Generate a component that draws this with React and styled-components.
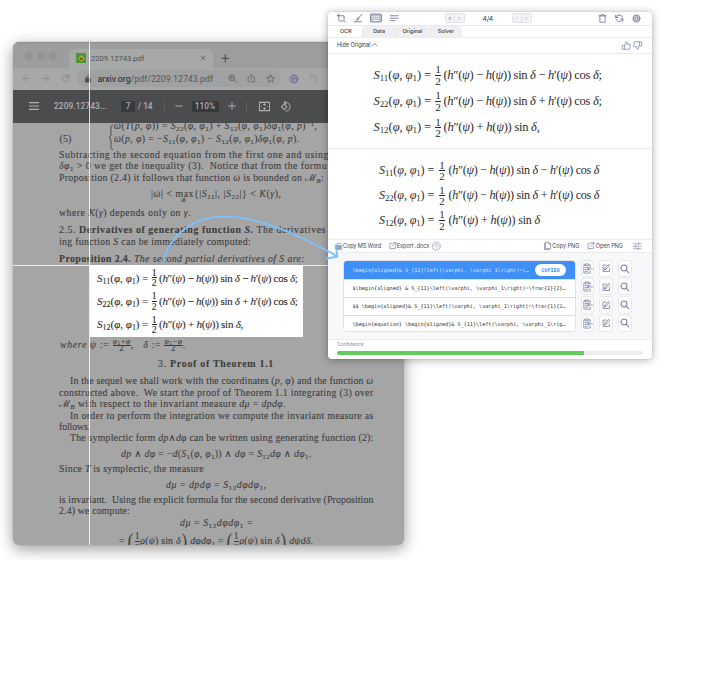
import React, { useLayoutEffect, useRef, useState } from "react";
import styled, { createGlobalStyle } from "styled-components";

const Global = createGlobalStyle`
  * { box-sizing: border-box; }
  html, body { margin: 0; background: #fff; }
  body { font-family: Inter, "Noto Sans", sans-serif; }
  svg { display: block; flex: none; overflow: visible; }
`;

const serif = `"Liberation Serif", "DejaVu Serif", serif`;

/* ---------- text set to a fixed measure ---------- */

const Measure = styled.span`
  display: inline-block;
  flex: none;
  white-space: pre;
  width: ${(p) => p.$w}px;
  margin-left: ${(p) => p.$ml || 0}px;
`;
const Run = styled.span`
  display: inline-block;
  white-space: pre;
`;

function Fit({ w, ml, children }) {
  const ref = useRef(null);
  const [spacing, setSpacing] = useState(null);
  useLayoutEffect(() => {
    if (spacing !== null) return;
    const natural = ref.current.getBoundingClientRect().width;
    const count = ref.current.textContent.length || 1;
    setSpacing((w - natural) / count);
  }, [spacing, w]);
  return (
    <Measure $w={w} $ml={ml}>
      <Run ref={ref} style={{ letterSpacing: spacing === null ? undefined : `${spacing}px` }}>
        {children}
      </Run>
    </Measure>
  );
}

/* ---------- math ---------- */

const Sub = styled.sub`
  font-size: 0.72em;
  line-height: 0;
  vertical-align: -0.22em;
  font-style: normal;
`;
const Sup = styled.sup`
  font-size: 0.72em;
  line-height: 0;
  vertical-align: 0.45em;
`;
const FracBox = styled.span`
  display: inline-flex;
  flex-direction: column;
  align-items: center;
  flex: none;
  line-height: 1;
  vertical-align: middle;
  margin: 0 ${(p) => p.$gap || 0}px;
  font-size: ${(p) => p.$size || "1em"};
  min-width: 0.5em;
`;
const FracTop = styled.span`
  border-bottom: 1px solid currentColor;
  min-width: 100%;
  text-align: center;
  line-height: ${(p) => p.$lh || 0.95};
`;
const FracBottom = styled.span`
  line-height: ${(p) => p.$lh || 0.95};
`;
const Frac = ({ a, b, size, gap, lh }) => (
  <FracBox $size={size} $gap={gap}>
    <FracTop $lh={lh}>{a}</FracTop>
    <FracBottom $lh={lh}>{b}</FracBottom>
  </FracBox>
);

const EqRow = styled.div`
  display: flex;
  align-items: center;
  height: ${(p) => p.$h}px;
  font: ${(p) => p.$size}px ${serif};
  color: ${(p) => p.$color || "#2b2b2b"};
`;
const FracCell = styled.span`
  display: flex;
  justify-content: center;
  width: ${(p) => p.$w}px;
`;
const Stack = styled.div`
  padding: ${(p) => p.$top}px 0 0 ${(p) => p.$left}px;
`;
const I = styled.i``;

const S = ({ n }) => (
  <>
    <I>S</I>
    <Sub>{n}</Sub>
  </>
);
const Args = () => (
  <>
    (<I>φ</I>, <I>φ</I>
    <Sub>1</Sub>)
  </>
);

function Equations({ top, left, rowH, size, cols, end, semi }) {
  const rows = [
    { n: "11", op: "−", tail: "−" },
    { n: "22", op: "−", tail: "+" },
    { n: "12", op: "+", tail: null },
  ];
  return (
    <Stack $top={top} $left={left}>
      {rows.map((r) => (
        <EqRow key={r.n} $h={rowH} $size={size}>
          <Fit w={cols[0]}>
            <S n={r.n} />
            (<I>φ</I>, <I>φ</I>
            <Sub>1</Sub>)
          </Fit>
          <Fit ml={cols[1]} w={cols[2]}>=</Fit>
          <FracCell $w={cols[3]}>
            <Frac a="1" b="2" size="0.9em" lh={0.93} />
          </FracCell>
          <Fit w={r.tail ? end[0] : end[1]}>
            (<I>h</I>″(<I>ψ</I>) {r.op} <I>h</I>(<I>ψ</I>)) sin <I>δ</I>
            {r.tail ? (
              <>
                {" "}{r.tail} <I>h</I>′(<I>ψ</I>) cos <I>δ</I>
                {semi ? ";" : ""}
              </>
            ) : semi ? (
              ","
            ) : (
              ""
            )}
          </Fit>
        </EqRow>
      ))}
    </Stack>
  );
}

/* ---------- icons ---------- */

const Svg = styled.svg`
  width: ${(p) => p.$s}px;
  height: ${(p) => p.$s}px;
  margin-left: ${(p) => p.$ml || 0}px;
  fill: none;
  stroke: ${(p) => p.$c || "currentColor"};
  stroke-width: ${(p) => p.$sw || 2};
  stroke-linecap: round;
  stroke-linejoin: round;
`;
const Icon = ({ s = 8, ml, c, sw, children }) => (
  <Svg viewBox="0 0 24 24" $s={s} $ml={ml} $c={c} $sw={sw} aria-hidden="true">
    {children}
  </Svg>
);

/* ---------- canvas and windows ---------- */

const Canvas = styled.main`
  position: relative;
  width: 725px;
  height: 560px;
  overflow: hidden;
`;
const Browser = styled.section`
  position: absolute;
  left: 12.5px;
  top: 41.5px;
  width: 391.5px;
  height: 503.5px;
  border-radius: 6px;
  overflow: hidden;
  background: #a5a5a5;
  display: flex;
  flex-direction: column;
`;
const BrowserShadow = styled.div`
  position: absolute;
  left: 12.5px;
  top: 41.5px;
  width: 391.5px;
  height: 503.5px;
  border-radius: 6px;
  box-shadow: 0 4px 15px rgba(0, 0, 0, 0.4), 0 0 1px rgba(0, 0, 0, 0.4);
`;
const TabStrip = styled.div`
  height: 26px;
  flex: none;
  display: flex;
  align-items: flex-end;
  padding-left: 12.5px;
  background: #9b9d9f;
  border-top: 1px solid #8d8f90;
  color: #4c4d4f;
`;
const Dots = styled.div`
  display: flex;
  gap: 4px;
  height: 23px;
  align-items: center;
  width: 44px;
  padding-bottom: 1px;
`;
const Dot = styled.span`
  width: 8px;
  height: 8px;
  border-radius: 50%;
  background: #929394;
`;
const ChromeTab = styled.div`
  width: 143.5px;
  height: 19px;
  border-radius: 5px 5px 0 0;
  background: #a7a8a8;
  display: flex;
  align-items: center;
  padding-left: 7px;
  font: 7.6px "Roboto", sans-serif;
  color: #505153;
`;
const Favicon = styled.span`
  width: 10px;
  height: 10px;
  background: #4a9a35;
  display: flex;
  align-items: center;
  justify-content: center;
`;
const NewTab = styled.div`
  height: 19px;
  display: flex;
  align-items: center;
  margin-left: 8px;
`;
const AddressBar = styled.div`
  height: 22px;
  flex: none;
  display: flex;
  align-items: center;
  padding-left: 8.5px;
  background: #a7a8a8;
  color: #767779;
`;
const Omnibox = styled.div`
  margin-left: 7px;
  width: 204px;
  height: 17px;
  border-radius: 9px;
  background: #9fa1a2;
  display: flex;
  align-items: center;
  padding-left: 7.5px;
  font: 8.9px "Roboto", sans-serif;
  color: #58595b;
`;
const Host = styled.span`
  color: #252628;
`;
const PdfBar = styled.div`
  height: 33.5px;
  flex: none;
  display: flex;
  align-items: center;
  padding-left: 16px;
  background: #4b4c4e;
  color: #b0b0b0;
  font: 500 8.3px "Roboto", sans-serif;
`;
const Field = styled.span`
  margin-left: ${(p) => p.$ml}px;
  width: ${(p) => p.$w}px;
  height: 11.5px;
  background: #38393a;
  display: flex;
  align-items: center;
  justify-content: center;
`;
const Divider = styled.span`
  margin-left: ${(p) => p.$ml}px;
  width: 1px;
  height: 9px;
  background: #606163;
`;
const Page = styled.article`
  flex: 1;
  overflow: hidden;
  font: 9.9px ${serif};
  color: #3e3e3e;
  -webkit-text-stroke: 0.1px currentColor;
`;
const Line = styled.div`
  display: flex;
  align-items: center;
  height: 11px;
  line-height: 11px;
  margin-top: ${(p) => p.$mt}px;
  padding-left: ${(p) => p.$x - 12.5}px;
`;
const Selection = styled.div`
  margin: 1.5px 0 0 77px;
  width: 213.5px;
  height: 72px;
  background: #fff;
`;
const Paren = styled.span`
  display: inline-block;
  font-size: 20px;
  line-height: 0;
  vertical-align: -4px;
  transform: scaleX(0.8);
`;
const MaxOp = styled.span`
  display: inline-block;
  position: relative;
`;
const Under = styled.span`
  position: absolute;
  left: 6px;
  top: 7px;
  font-size: 5.5px;
`;
const CrossV = styled.div`
  position: absolute;
  left: 89px;
  top: 41.5px;
  width: 1px;
  height: 503.5px;
  background: rgba(255, 255, 255, 0.8);
`;
const CrossH = styled.div`
  position: absolute;
  left: 12.5px;
  top: 265px;
  width: 315px;
  height: 1px;
  background: rgba(255, 255, 255, 0.75);
`;
const Arrow = styled.svg`
  position: absolute;
  left: 0;
  top: 0;
  width: 725px;
  height: 560px;
  fill: none;
  stroke: #7fc0f7;
  stroke-width: 1.8;
  stroke-linecap: round;
  stroke-linejoin: round;
`;

/* ---------- snip panel ---------- */

const Panel = styled.section`
  position: absolute;
  left: 327.5px;
  top: 11.5px;
  width: 324.5px;
  height: 347.5px;
  border-radius: 4px;
  overflow: hidden;
  background: #fff;
  color: #3b3d4a;
  font-size: 5.6px;
`;
const PanelShadow = styled.div`
  position: absolute;
  left: 327.5px;
  top: 11.5px;
  width: 324.5px;
  height: 347.5px;
  border-radius: 4px;
  box-shadow: 0 1px 8px rgba(0, 0, 0, 0.32), 0 0 1px rgba(0, 0, 0, 0.35);
`;
const Bar = styled.div`
  display: flex;
  align-items: center;
  height: ${(p) => p.$h}px;
  padding-left: ${(p) => p.$pl || 0}px;
  border-bottom: 1px solid #ebebef;
  color: ${(p) => p.$c || "inherit"};
`;
const Nav = styled.span`
  display: flex;
  margin-left: ${(p) => p.$ml}px;
  width: 20px;
  height: 10px;
  border: 1px solid #dfe0e8;
  border-radius: 2px;
  background: #f4f4f7;
  color: ${(p) => p.$c};
  font-size: 6px;
  line-height: 7px;
`;
const NavHalf = styled.span`
  flex: 1;
  text-align: center;
  & + & { border-left: 1px solid #e2e3e9; }
`;
const Count = styled.span`
  margin-left: 18px;
  font-size: 6.8px;
  color: #333;
`;
const Tabs = styled.div`
  display: flex;
  height: 11.5px;
  padding-left: 1px;
  border-bottom: 1px solid #ececf0;
`;
const Tab = styled.div`
  width: 33.4px;
  border-radius: 4px 4px 0 0;
  background: ${(p) => (p.$on ? "#fff" : "#efeff2")};
  border-left: 1px solid ${(p) => (p.$on ? "#fff" : "#e6e6eb")};
  display: flex;
  align-items: center;
  justify-content: center;
  font-size: 5.4px;
  font-weight: 500;
`;
const Preview = styled.div`
  height: ${(p) => p.$h}px;
  border-bottom: 1px solid #ececf0;
`;
const Results = styled.div`
  height: 87px;
  background: #f8f8fa;
  border-bottom: 1px solid #eeeef1;
  padding: 7px 0 0 15px;
  display: grid;
  grid-template-columns: 233px 13.5px 13.5px 14px;
  column-gap: 5px;
`;
const List = styled.div`
  height: 72px;
  border: 1px solid #e1e1e6;
  border-radius: 4px;
  overflow: hidden;
  background: #fff;
`;
const Formula = styled.div`
  height: ${(p) => (p.$on ? 17.5 : 18)}px;
  display: flex;
  align-items: center;
  padding-left: 9px;
  font: 5.2px "DejaVu Sans Mono", monospace;
  background: ${(p) => (p.$on ? "#3e8ff7" : "#fff")};
  color: ${(p) => (p.$on ? "#dbe9ff" : "#333")};
  & + & { border-top: 1px solid #dedee3; }
`;
const Copied = styled.span`
  margin-left: 6.5px;
  width: 31px;
  height: 12px;
  border-radius: 6px;
  background: #fff;
  color: #3e8ff7;
  font: 800 5.1px "DejaVu Sans Mono", monospace;
  display: flex;
  align-items: center;
  justify-content: center;
`;
const ButtonColumn = styled.div`
  display: flex;
  flex-direction: column;
  gap: 1px;
`;
const IconButton = styled.button`
  padding: 0;
  width: 100%;
  height: 17.2px;
  border: 1px solid #e8e8ed;
  border-radius: 3px;
  background: #fff;
  color: #7a7fa0;
  display: flex;
  align-items: center;
  justify-content: center;
`;
const Footer = styled.div`
  padding: 1px 9.5px 0;
  color: #9194aa;
  font-size: 5.2px;
  line-height: 7px;
`;
const Track = styled.div`
  margin-top: 2.5px;
  height: 4px;
  border-radius: 2px;
  background: #ececee;
`;
const Fill = styled.div`
  width: 246.5px;
  height: 4px;
  border-radius: 2px 0 0 2px;
  background: #63ca5c;
`;

const formulas = [
  "\\begin{aligned}& S_{11}\\left(\\varphi, \\varphi_1\\right)=\\…",
  "$\\begin{aligned} & S_{11}\\left(\\varphi, \\varphi_1\\right)=\\frac{1}{2}…",
  "$$ \\begin{aligned}& S_{11}\\left(\\varphi, \\varphi_1\\right)=\\frac{1}{2…",
  "\\begin{equation} \\begin{aligned}& S_{11}\\left(\\varphi, \\varphi_1\\rig…",
];

const buttonIcons = [
  <Icon s={11} sw={1.7} key="paste">
    <path d="M8 4H4v18h14v-4M14 4h4v5M8 2h6v4H8zM7 10h8M7 14h5M7 18h6M23 13H13M16 10l-3 3 3 3" />
  </Icon>,
  <Icon s={8.5} sw={2.4} key="edit">
    <path d="M11 3H3v18h18v-8M20 2l2 2L11 15l-4 1 1-4zM7 16l4-1" />
  </Icon>,
  <Icon s={9.5} sw={2.6} key="search">
    <circle cx="10" cy="10" r="7.5" />
    <path d="M15.5 15.5l7 7" />
  </Icon>,
];

const M = () => (
  <>
    ℳ<Sub><I>B</I></Sub>
  </>
);
const phi1 = (
  <>
    <I>φ</I>
    <Sub>1</Sub>
  </>
);

function PdfPage() {
  return (
    <Page>
      <Line $mt={-3} $x={114}>
        <Fit w={203}>
          <I>ω</I>(<I>T</I>(<I>p</I>, <I>φ</I>)) = <S n="22" /><Args /> + <S n="12" /><Args /><I>δ</I>{phi1}(<I>φ</I>, <I>p</I>)<Sup>−1</Sup>,
        </Fit>
      </Line>
      <Line $mt={2} $x={59.5}>
        <Fit w={12}>(5)</Fit>
        <Svg viewBox="0 0 6 26" $s={26} $ml={26} $sw={0.9}>
          <path d="M5 -1c-3 0-2 3-2 6s0 6-2 6.500c2 .5 2 3 2 6s-1 6 2 6" />
        </Svg>
        <Fit ml={-9.5} w={185.5}>
          <I>ω</I>(<I>p</I>, <I>φ</I>) = −<S n="11" /><Args /> − <S n="12" /><Args /><I>δ</I>{phi1}(<I>φ</I>, <I>p</I>).
        </Fit>
      </Line>
      <Line $mt={5} $x={59}><Fit w={270}>Subtracting the second equation from the first one and using</Fit></Line>
      <Line $mt={0.4} $x={59}><Fit w={268}><I>δ</I>{phi1} &gt; 0 we get the inequality (3).  Notice that from the formu</Fit></Line>
      <Line $mt={0.4} $x={59}><Fit w={265}>Proposition (2.4) it follows that function <I>ω</I> is bounded on <M />:</Fit></Line>
      <Line $mt={5.2} $x={151}>
        <Fit w={131}>|<I>ω</I>| &lt; <MaxOp>max<Under>ℬ</Under></MaxOp>{"{"}|<S n="11" />|, |<S n="22" />|{"}"} &lt; <I>K</I>(<I>γ</I>),</Fit>
      </Line>
      <Line $mt={8} $x={59}><Fit w={132}>where <I>K</I>(<I>γ</I>) depends only on <I>γ</I>.</Fit></Line>
      <Line $mt={6.3} $x={59}><Fit w={267}>2.5. <b>Derivatives of generating function <I>S</I>.</b> The derivatives</Fit></Line>
      <Line $mt={0.5} $x={59}><Fit w={192}>ing function <I>S</I> can be immediately computed:</Fit></Line>
      <Line $mt={6} $x={59}><Fit w={246}><b>Proposition 2.4.</b> <I>The second partial derivatives of S are:</I></Fit></Line>
      <Selection>
        <Equations top={1} left={7.5} rowH={23.2} size={11} cols={[42.5, 2.5, 7.5, 9.5]} end={[138.5, 84]} semi />
      </Selection>
      <Line $mt={3} $x={60}>
        <Fit w={127}>
          <I>where ψ</I> := <Frac size="0.78em" lh={0.85} a={<>{phi1}+<I>φ</I></>} b="2" />,   <I>δ</I> := <Frac size="0.78em" lh={0.85} a={<>{phi1}−<I>φ</I></>} b="2" />.
        </Fit>
      </Line>
      <Line $mt={7.2} $x={158}><Fit w={116}>3. <b>Proof of Theorem 1.1</b></Fit></Line>
      <Line $mt={5.8} $x={70}><Fit w={303.5}>In the sequel we shall work with the coordinates (<I>p</I>, <I>φ</I>) and the function <I>ω</I></Fit></Line>
      <Line $mt={0.5} $x={59}><Fit w={314.5}>constructed above.  We start the proof of Theorem 1.1 integrating (3) over</Fit></Line>
      <Line $mt={0.5} $x={59}><Fit w={227}><M /> with respect to the invariant measure <I>dμ</I> = <I>dpdφ</I>.</Fit></Line>
      <Line $mt={0.4} $x={70}><Fit w={303.5}>In order to perform the integration we compute the invariant measure as</Fit></Line>
      <Line $mt={0.4} $x={59}><Fit w={31}>follows.</Fit></Line>
      <Line $mt={0.4} $x={70}><Fit w={303.5}>The symplectic form <I>dp</I>∧<I>dφ</I> can be written using generating function (2):</Fit></Line>
      <Line $mt={4.6} $x={121}>
        <Fit w={190.5}><I>dp</I> ∧ <I>dφ</I> = −<I>d</I>(<S n="1" /><Args />) ∧ <I>dφ</I> = <S n="12" /><I>dφ</I> ∧ <I>d</I>{phi1}.</Fit>
      </Line>
      <Line $mt={4.2} $x={59}><Fit w={145}>Since <I>T</I> is symplectic, the measure</Fit></Line>
      <Line $mt={4.6} $x={166}><Fit w={100.5}><I>dμ</I> = <I>dpdφ</I> = <S n="12" /><I>dφd</I>{phi1},</Fit></Line>
      <Line $mt={4.3} $x={59}><Fit w={314.5}>is invariant.  Using the explicit formula for the second derivative (Proposition</Fit></Line>
      <Line $mt={0.4} $x={59}><Fit w={71}>2.4) we compute:</Fit></Line>
      <Line $mt={0.6} $x={180}><Fit w={73}><I>dμ</I> = <S n="12" /><I>dφd</I>{phi1} =</Fit></Line>
      <Line $mt={8} $x={119}>
        <Fit w={194.5}>
          = <Paren>(</Paren><Frac a="1" b="2" gap={0.5} lh={1.15} /><I>ρ</I>(<I>ψ</I>) sin <I>δ</I><Paren>)</Paren> <I>dφd</I>{phi1} = <Paren>(</Paren><Frac a="1" b="2" gap={0.5} lh={1.15} /><I>ρ</I>(<I>ψ</I>) sin <I>δ</I><Paren>)</Paren> <I>dψdδ</I>.
        </Fit>
      </Line>
    </Page>
  );
}

function BrowserWindow() {
  return (
    <Browser>
      <TabStrip>
        <Dots><Dot /><Dot /><Dot /></Dots>
        <ChromeTab>
          <Favicon>
            <Icon s={9} sw={2.4} c="#b9b04a">
              <path d="M4 5l3 3M20 5l-3 3M4 20l3-3M20 20l-3-3" stroke="#2c6e1e" />
              <circle cx="12" cy="12" r="6.500" fill="#a49a3c" />
              <path d="M8 11h8M9 15h6" stroke="#5b5a22" />
            </Icon>
          </Favicon>
          <Fit ml={5} w={53.5}>2209.12743.pdf</Fit>
          <Icon s={6} ml={55} sw={2.6} c="#4b4c4e"><path d="M4 4l16 16M20 4L4 20" /></Icon>
        </ChromeTab>
        <NewTab><Icon s={8.5} sw={2.8} c="#444547"><path d="M12 2v20M2 12h20" /></Icon></NewTab>
      </TabStrip>
      <AddressBar>
        <Icon s={9} c="#848587" ml={0.5}><path d="M22 12H3M11 4l-8 8 8 8" /></Icon>
        <Icon s={9} ml={10.5} c="#848587"><path d="M2 12h19M13 4l8 8-8 8" /></Icon>
        <Icon s={9} ml={10.5} c="#7b7c7e"><path d="M20 7a9 9 0 1 0 1 7M21 2v7h-7" /></Icon>
        <Omnibox>
          <Icon s={8} sw={2.5} c="#4b4c4e"><rect x="5" y="10" width="14" height="11" fill="#4b4c4e" /><path d="M8 10V6a4 4 0 0 1 8 0v4" /></Icon>
          <Fit ml={5.5} w={115.5}><Host>arxiv.org</Host>/pdf/2209.12743.pdf</Fit>
          <Icon s={9} ml={14.5} sw={2.4} c="#606163"><circle cx="10" cy="10" r="7.5" /><path d="M16 16l6 6M10 7v6M7 10h6" /></Icon>
          <Icon s={8.5} ml={10} c="#606163"><path d="M7 9H3v13h18V9h-4M12 15V2M8 5l4-4 4 4" /></Icon>
          <Icon s={9} ml={10.5} c="#606163"><path d="M12 2l3 7 7.500.7-5.700 5 1.700 7.300L12 18l-6.500 4 1.700-7.300-5.700-5L9 9z" /></Icon>
        </Omnibox>
        <Icon s={10} ml={8.5} c="#7c7d93" sw={2}><circle cx="12" cy="12" r="10" fill="#7f8097" /><path d="M16 8a6 6 0 1 0 1 6h-4" stroke="#a7a8b0" /></Icon>
        <Icon s={9} ml={10} c="#98999b" sw={2.5}><path d="M3 21V3h18v18M8 8h8v13M3 3l5 5" /></Icon>
      </AddressBar>
      <PdfBar>
        <Icon s={10} c="#b0b0b0" sw={2.8}><path d="M1 4h22M1 12h22M1 20h22" /></Icon>
        <Fit ml={15.5} w={53}>2209.12743...</Fit>
        <Field $ml={14} $w={14}>7</Field>
        <Fit ml={3} w={14.5}>/ 14</Fit>
        <Divider $ml={11} />
        <Icon s={8} ml={10} sw={2.8}><path d="M2 12h20" /></Icon>
        <Field $ml={9} $w={27}>110%</Field>
        <Icon s={8} ml={9.5} sw={2.8}><path d="M12 2v20M2 12h20" /></Icon>
        <Divider $ml={9.5} />
        <Icon s={11} ml={12} sw={2.2}><rect x="1" y="3" width="22" height="18" /><path d="M10 8l2-2 2 2M10 16l2 2 2-2M12 6v3M12 18v-3M5 12h.1M19 12h.1" /></Icon>
        <Icon s={11} ml={10.5} sw={2.2}><path d="M9 7l6 6-6 6-6-6zM12 1L9 4l3 3M9 4h4a9 9 0 0 1 0 18" /></Icon>
      </PdfBar>
      <PdfPage />
    </Browser>
  );
}

const openPath = <path d="M11 4H3v17h17v-8M14 2h8v8M22 2L10 14" />;

function SnipPanel() {
  const ink = "#6d7296";
  return (
    <Panel>
      <Bar $h={14.5} $pl={9.500} $c={ink}>
        <Icon s={8.500} sw={2.4}><path d="M1 5h19v11a4 4 0 0 1-4 4H9a4 4 0 0 1-4-4V1M1 5l3-3M20 20l3 3" /></Icon>
        <Icon s={8.500} ml={8} sw={2.4}><path d="M22 1L12 12M12 11c-4 0-3 4-7 5 3 2 8 2 9-3zM1 22h20" /></Icon>
        <Icon s={12} ml={7.5} sw={2}><rect x="1" y="4" width="22" height="16" rx="2" fill="#b8bbcf" stroke="#8b8fac" /><path d="M5 9h1M9 9h1M13 9h1M17 9h1M5 13h1M9 13h1M13 13h1M17 13h1M7 17h10" stroke="#f4f4f8" /></Icon>
        <Icon s={8.500} ml={8.500} sw={2.400}><path d="M1 5h22M1 12h22M1 19h13" /></Icon>
        <Nav $ml={46} $c="#8d91ae"><NavHalf>«</NavHalf><NavHalf>‹</NavHalf></Nav>
        <Count><Fit w={10.5}>4/4</Fit></Count>
        <Nav $ml={18.500} $c="#c5c7d6"><NavHalf>›</NavHalf><NavHalf>»</NavHalf></Nav>
        <Icon s={9} ml={66} sw={2.2}><path d="M2 5h20M5 5v17h14V5M8 5V2h8v3" /></Icon>
        <Icon s={8.500} ml={8.500} sw={2.6}><path d="M2 4v6h6M2 10C4 1 18 0 21 9M22 20v-6h-6M22 14c-2 9-16 10-19 1" /></Icon>
        <Icon s={9} ml={8.500} sw={2.6} c="#8589a8"><circle cx="12" cy="12" r="9.5" fill="#c7c9d9" /><circle cx="12" cy="12" r="3.500" fill="#fff" /></Icon>
      </Bar>
      <Tabs>
        <Tab $on>OCR</Tab>
        <Tab>Data</Tab>
        <Tab>Original</Tab>
        <Tab>Solver</Tab>
      </Tabs>
      <Bar $h={16} $pl={9.500}>
        <Fit w={33.5}>Hide Original</Fit>
        <Icon s={5.500} ml={1.5} sw={3.500} c={ink}><path d="M2 17L12 7l10 10" /></Icon>
        <Icon s={9} ml={244.500} sw={2} c="#8387a8"><path d="M2 11h5v11H2zM7 12l4-10c5 0 3 5 2 7h9l-2 13H7" /></Icon>
        <Icon s={9} ml={1.500} sw={2} c="#8387a8"><path d="M22 13h-5V2h5zM17 12l-4 10c-5 0-3-5-2-7H2L4 2h13" /></Icon>
      </Bar>
      <Preview $h={95.5}>
        <Equations top={8.500} left={46} rowH={26.3} size={12.5} cols={[47.5, 3, 8.500, 11]} end={[158, 96]} semi />
      </Preview>
      <Preview $h={91}>
        <Equations top={9.600} left={51.500} rowH={24.600} size={12.1} cols={[45.5, 3, 8, 13]} end={[150.500, 91.500]} />
      </Preview>
      <Bar $h={13} $pl={8} $c="#444653">
        <Icon s={7} c={ink}><path d="M5 1h10l5 5v17H5z" /><rect x="1" y="9" width="15" height="10" fill="#9da1bb" /></Icon>
        <Fit ml={0.5} w={38}>Copy MS Word</Fit>
        <Icon s={7.500} ml={7.5} c={ink}>{openPath}</Icon>
        <Fit ml={0.800} w={32.5}>Export .docx</Fit>
        <Icon s={8.500} ml={2.5} c="#8d90ab" sw={1.8}><circle cx="12" cy="12" r="11" /><path d="M8.500 9.500c0-5 7-5 7-.5 0 3-3.500 3-3.500 5.500M12 18v.2" /></Icon>
        <Icon s={8} ml={104} c={ink}><path d="M5 1h10l5 5v14H5zM15 1v5h5M5 5H2v18h14" /></Icon>
        <Fit ml={0} w={27}>Copy PNG</Fit>
        <Icon s={7.500} ml={8} c={ink}>{openPath}</Icon>
        <Fit ml={1} w={27}>Open PNG</Fit>
        <Icon s={8.500} ml={10} c="#8d90ab"><path d="M1 5h22M1 12h22M1 19h22M16 2v6M7 9v6M15 16v6" /></Icon>
      </Bar>
      <Results>
        <List>
          {formulas.map((f, i) => (
            <Formula key={f} $on={i === 0}>
              <Fit w={i === 0 ? 176 : 213}>{f}</Fit>
              {i === 0 && <Copied>COPIED</Copied>}
            </Formula>
          ))}
        </List>
        {buttonIcons.map((icon) => (
          <ButtonColumn key={icon.key}>
            {formulas.map((f) => <IconButton key={f}>{icon}</IconButton>)}
          </ButtonColumn>
        ))}
      </Results>
      <Footer>
        <Fit w={26.5}>Confidence</Fit>
        <Track><Fill /></Track>
      </Footer>
    </Panel>
  );
}

export default function App() {
  return (
    <>
      <Global />
      <Canvas>
        <BrowserShadow />
        <BrowserWindow />
        <CrossV />
        <CrossH />
        <PanelShadow />
        <SnipPanel />
        <Arrow viewBox="0 0 725 560">
          <path d="M163 262C170 234 194 216.500 224 216.500C262 217 300 236 337 256" />
          <path d="M335.500 245.500L337.500 256.500L327 258.500" />
        </Arrow>
      </Canvas>
    </>
  );
}
